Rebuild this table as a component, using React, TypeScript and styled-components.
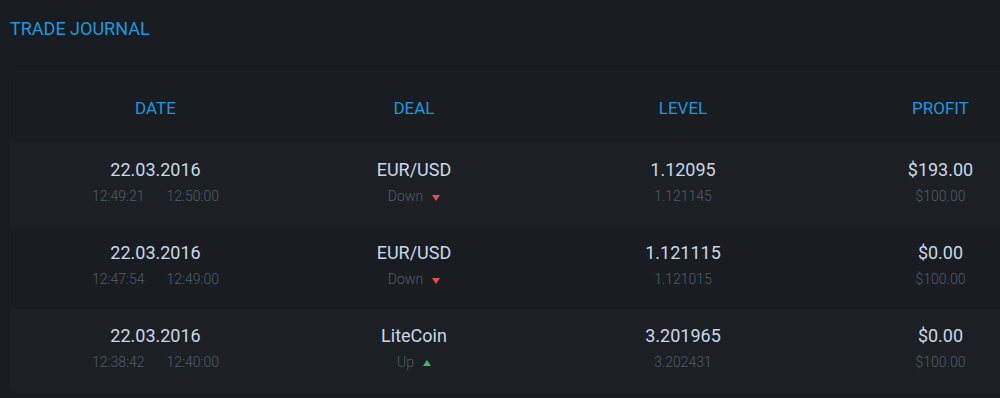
import React from "react";
import styled, { createGlobalStyle } from "styled-components";

const Global = createGlobalStyle`
  html, body { margin: 0; padding: 0; background: #181b1f; overflow: hidden; }
  body { font-family: Roboto, "Liberation Sans", Arial, sans-serif; }
`;

const Page = styled.div`
  width: 1000px;
  height: 398px;
  padding: 0 0 0 10px;
  box-sizing: border-box;
  background: #181b1f;
  overflow: hidden;
`;

const Title = styled.h1`
  margin: 0;
  padding-top: 17px;
  height: 71px;
  box-sizing: border-box;
  font-size: 18px;
  line-height: 24px;
  font-weight: 400;
  color: #1e98dd;
  letter-spacing: 0;
`;

const Panel = styled.div`
  width: 1040px;
  background: #191c21;
  border: 1px solid #1d2025;
  border-right: none;
  border-radius: 6px 0 0 6px;
  overflow: hidden;
  box-sizing: border-box;
`;

const Grid = styled.div`
  display: grid;
  grid-template-columns: 289px 228px 310px 205px;
`;

const HeadRow = styled(Grid)`
  height: 71px;
  align-items: center;
`;

const HeadCell = styled.div`
  text-align: center;
  font-size: 17px;
  line-height: 20px;
  color: #1e98dd;
  padding-top: 1px;
`;

const Row = styled(Grid)<{ $alt: boolean }>`
  height: 83px;
  background: ${(p) => (p.$alt ? "#1c2025" : "#191c21")};
  align-items: start;
`;

const Cell = styled.div`
  display: flex;
  flex-direction: column;
  align-items: center;
  padding-top: 16px;
`;

const Main = styled.div`
  font-size: 18px;
  line-height: 22px;
  color: #c9d8e8;
  font-weight: 400;
`;

const Sub = styled.div`
  margin-top: 6px;
  font-size: 14px;
  line-height: 18px;
  color: #505c68;
  font-weight: 300;
  display: flex;
  align-items: center;
  gap: 22px;
`;

const Dir = styled.span`
  display: inline-flex;
  align-items: center;
  gap: 9px;
`;

const Tri = styled.span<{ $up: boolean }>`
  width: 0;
  height: 0;
  border-left: 4px solid transparent;
  border-right: 4px solid transparent;
  ${(p) =>
    p.$up
      ? "border-bottom: 6px solid #33c15a; margin-top: 2px;"
      : "border-top: 6px solid #e8504c; margin-top: 3px;"}
`;

type Trade = {
  date: string;
  open: string;
  close: string;
  deal: string;
  up: boolean;
  level: string;
  level2: string;
  profit: string;
  amount: string;
};

const trades: Trade[] = [
  { date: "22.03.2016", open: "12:49:21", close: "12:50:00", deal: "EUR/USD", up: false, level: "1.12095", level2: "1.121145", profit: "$193.00", amount: "$100.00" },
  { date: "22.03.2016", open: "12:47:54", close: "12:49:00", deal: "EUR/USD", up: false, level: "1.121115", level2: "1.121015", profit: "$0.00", amount: "$100.00" },
  { date: "22.03.2016", open: "12:38:42", close: "12:40:00", deal: "LiteCoin", up: true, level: "3.201965", level2: "3.202431", profit: "$0.00", amount: "$100.00" },
];

export default function App() {
  return (
    <Page>
      <Global />
      <Title>TRADE JOURNAL</Title>
      <Panel>
        <HeadRow>
          <HeadCell>DATE</HeadCell>
          <HeadCell>DEAL</HeadCell>
          <HeadCell>LEVEL</HeadCell>
          <HeadCell>PROFIT</HeadCell>
        </HeadRow>
        {trades.map((t, i) => (
          <Row key={i} $alt={i % 2 === 0}>
            <Cell>
              <Main>{t.date}</Main>
              <Sub>
                <span>{t.open}</span>
                <span>{t.close}</span>
              </Sub>
            </Cell>
            <Cell>
              <Main>{t.deal}</Main>
              <Sub>
                <Dir>
                  {t.up ? "Up" : "Down"}
                  <Tri $up={t.up} />
                </Dir>
              </Sub>
            </Cell>
            <Cell>
              <Main>{t.level}</Main>
              <Sub>{t.level2}</Sub>
            </Cell>
            <Cell>
              <Main>{t.profit}</Main>
              <Sub>{t.amount}</Sub>
            </Cell>
          </Row>
        ))}
      </Panel>
    </Page>
  );
}
